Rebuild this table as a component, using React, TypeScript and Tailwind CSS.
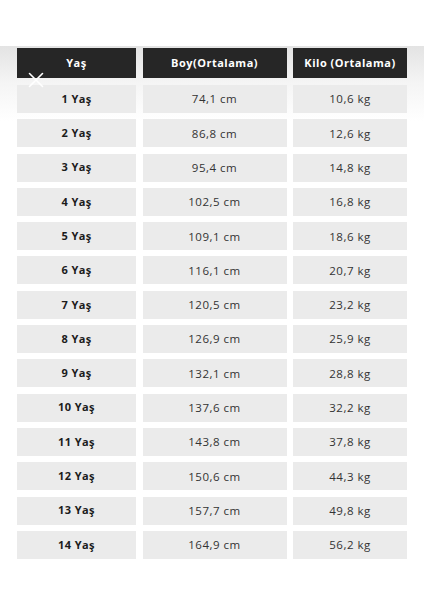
import React from 'react';

const rows: [string, string, string][] = [
  ['1 Yaş', '74,1 cm', '10,6 kg'],
  ['2 Yaş', '86,8 cm', '12,6 kg'],
  ['3 Yaş', '95,4 cm', '14,8 kg'],
  ['4 Yaş', '102,5 cm', '16,8 kg'],
  ['5 Yaş', '109,1 cm', '18,6 kg'],
  ['6 Yaş', '116,1 cm', '20,7 kg'],
  ['7 Yaş', '120,5 cm', '23,2 kg'],
  ['8 Yaş', '126,9 cm', '25,9 kg'],
  ['9 Yaş', '132,1 cm', '28,8 kg'],
  ['10 Yaş', '137,6 cm', '32,2 kg'],
  ['11 Yaş', '143,8 cm', '37,8 kg'],
  ['12 Yaş', '150,6 cm', '44,3 kg'],
  ['13 Yaş', '157,7 cm', '49,8 kg'],
  ['14 Yaş', '164,9 cm', '56,2 kg'],
];

export default function App() {
  return (
    <div className="relative w-[424px] h-[600px] bg-white overflow-hidden font-['Open_Sans',_'DejaVu_Sans',_sans-serif]">
      <div className="h-[46px] bg-white" />
      <div className="bg-[linear-gradient(to_bottom,#e3e3e3_0px,#f4f4f4_35px,#ffffff_75px)] pt-[2px] pl-[17px]">
        <div className="grid grid-cols-[119px_144px_114px] gap-x-[6.5px]">
          {['Yaş', 'Boy(Ortalama)', 'Kilo (Ortalama)'].map((h) => (
            <div key={h} className="h-[30px] bg-[#262626] flex items-center justify-center text-white text-[11px] font-bold tracking-[0.5px]">
              {h}
            </div>
          ))}
        </div>
        <div className="grid grid-cols-[119px_144px_114px] gap-x-[6.5px] gap-y-[6.3px] mt-[7px]">
          {rows.map(([a, b, c]) => (
            <React.Fragment key={a}>
              <div className="h-[28px] bg-[#ebebeb] flex items-center justify-center text-[11px] font-bold tracking-[0.4px] text-[#1c1c1c]">{a}</div>
              <div className="h-[28px] bg-[#ebebeb] flex items-center justify-center text-[11.5px] tracking-[0.5px] text-[#333]">{b}</div>
              <div className="h-[28px] bg-[#ebebeb] flex items-center justify-center text-[11.5px] tracking-[0.5px] text-[#333]">{c}</div>
            </React.Fragment>
          ))}
        </div>
      </div>
      <svg className="absolute left-[28px] top-[72px]" width="16" height="16" viewBox="0 0 16 16">
        <path d="M1.5 1.5L14.5 14.5M14.5 1.5L1.5 14.5" stroke="white" strokeWidth="1.6" strokeLinecap="round" />
      </svg>
    </div>
  );
}
